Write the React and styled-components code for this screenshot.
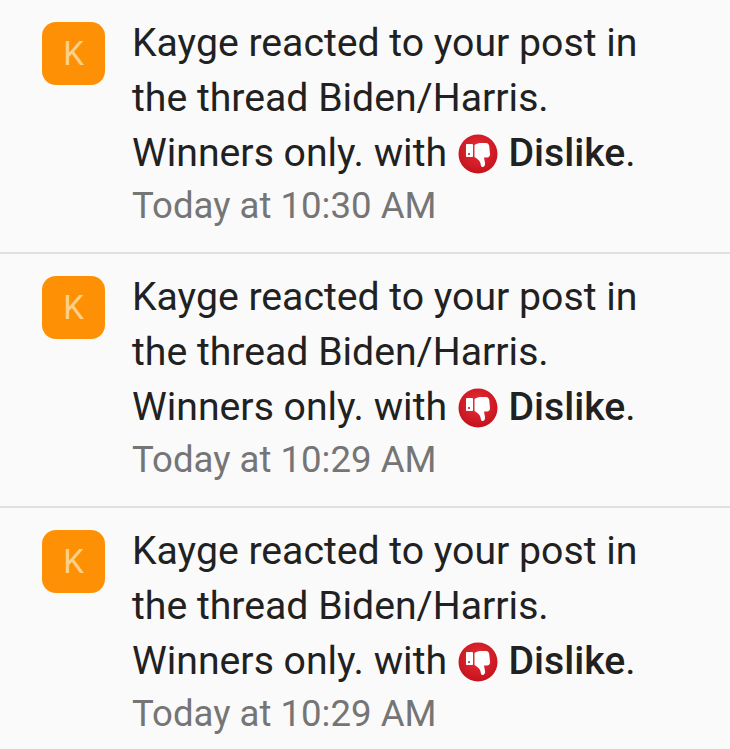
import React from 'react'
import styled, { createGlobalStyle } from 'styled-components'

const alerts = [
    { id: 1, time: 'Today at 10:30 AM' },
    { id: 2, time: 'Today at 10:29 AM' },
    { id: 3, time: 'Today at 10:29 AM' },
]

const DislikeIcon = ({ id }) => (
    <ReactionSvg viewBox="0 0 40 40">
        <defs>
            <radialGradient id={id} cx="50%" cy="40%" r="60%">
                <stop offset="0%" stopColor="#e8313a" />
                <stop offset="100%" stopColor="#c5121c" />
            </radialGradient>
        </defs>
        <circle cx="20" cy="20" r="19.5" fill={`url(#${id})`} />
        <rect x="8" y="10" width="7" height="13" rx="0.8" fill="#fff" />
        <circle cx="11" cy="20" r="1" fill="#b3131c" />
        <path
            d="M16.5 11 C18 10 20 9 22 9 L28 9 C30 9 31 10.5 31.2 12 L32 20 C32 22 31 23.5 29 23.5 L26 23.5 L27 29 C27.5 32 25.5 33.5 24 33 C22.5 32.5 23 30 22 28 C21 26 18.5 24 16.5 23 Z"
            fill="#fff"
        />
    </ReactionSvg>
)

export default function App() {
    return (
        <>
            <GlobalStyle />
            <AlertList>
                {alerts.map(alert => (
                    <AlertRow key={alert.id}>
                        <Avatar>K</Avatar>
                        <AlertBody>
                            <Message>
                                Kayge reacted to your post in the thread Biden/Harris. Winners only. with{' '}
                                <DislikeIcon id={`dislike-${alert.id}`} /> <strong>Dislike</strong>.
                            </Message>
                            <Timestamp>{alert.time}</Timestamp>
                        </AlertBody>
                    </AlertRow>
                ))}
            </AlertList>
        </>
    )
}

const GlobalStyle = createGlobalStyle`
    html, body {
        margin: 0;
        padding: 0;
        background: #fafafa;
    }
    body {
        font-family: Roboto, "Liberation Sans", sans-serif;
    }
`

const AlertList = styled.div`
    width: 730px;
    height: 749px;
    overflow: hidden;
    background: #fafafa;
`

const AlertRow = styled.div`
    display: flex;
    align-items: flex-start;
    gap: 27px;
    height: 252px;
    padding-left: 42px;
    border-bottom: 2px solid #e0e0e0;

    &:last-child {
        border-bottom: 0;
    }
`

const Avatar = styled.div`
    flex: none;
    width: 63px;
    height: 63px;
    margin-top: 22px;
    border-radius: 14px;
    background: #fe9006;
    color: #fdd08a;
    font-size: 33px;
    line-height: 63px;
    text-align: center;
`

const AlertBody = styled.div`
    width: 540px;
    padding-top: 16px;
`

const Message = styled.div`
    color: #212121;
    font-size: 39.2px;
    line-height: 55px;

    strong {
        font-weight: 500;
    }
`

const Timestamp = styled.div`
    color: #757575;
    font-size: 36.6px;
    line-height: 50px;
`

const ReactionSvg = styled.svg`
    width: 40px;
    height: 40px;
    margin: 0 1px;
    vertical-align: -8px;
`
